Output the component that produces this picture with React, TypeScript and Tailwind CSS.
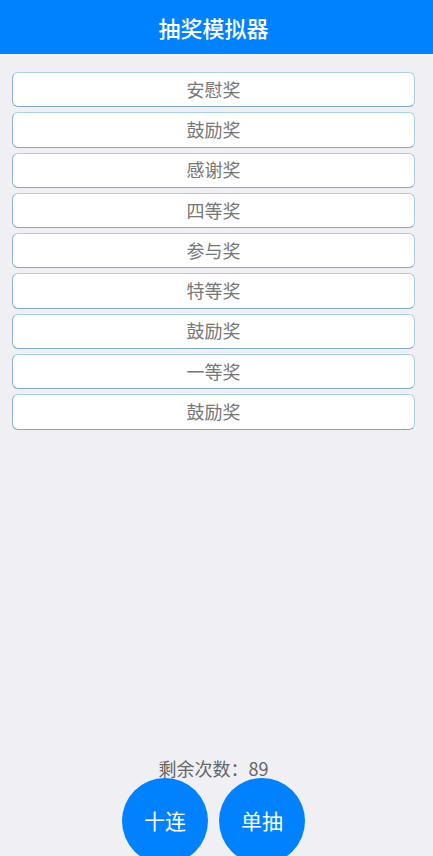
const prizes = ['安慰奖', '鼓励奖', '感谢奖', '四等奖', '参与奖', '特等奖', '鼓励奖', '一等奖', '鼓励奖'];

const font = { fontFamily: '"Noto Sans CJK SC", "Noto Sans", sans-serif' };

export default function App() {
  return (
    <div className="flex h-[856px] w-[433px] flex-col overflow-hidden bg-[#efeff4]" style={font}>
      {/* Header */}
      <div className="flex h-[54px] shrink-0 items-center justify-center bg-[#0082ff] pr-[6px]">
        <h1 className="text-[22px] font-medium text-white">抽奖模拟器</h1>
      </div>

      {/* Results */}
      <div className="flex flex-col gap-[5px] pl-3 pr-[18px] pt-[18px]">
        {prizes.map((p, i) => (
          <div
            key={i}
            className="flex h-[35.3px] items-center justify-center rounded-[6px] border border-[#a8cfe2] border-b-[#7fa9c6] border-l-[#8ab3cd] bg-white pb-[2px] text-[18px] leading-none text-[#777]"
          >
            {p}
          </div>
        ))}
      </div>

      <div className="flex-1" />

      {/* Bottom */}
      <div className="flex flex-col items-center pr-[6px]">
        <p className="pb-[1px] text-[18px] leading-none text-[#666]">剩余次数：89</p>
        <div className="flex h-[78px] gap-[11px]">
          <button className="h-[86px] w-[86px] rounded-full bg-[#0082ff] text-[21px] text-white">十连</button>
          <button className="h-[86px] w-[86px] rounded-full bg-[#0082ff] text-[21px] text-white">单抽</button>
        </div>
      </div>
    </div>
  );
}
